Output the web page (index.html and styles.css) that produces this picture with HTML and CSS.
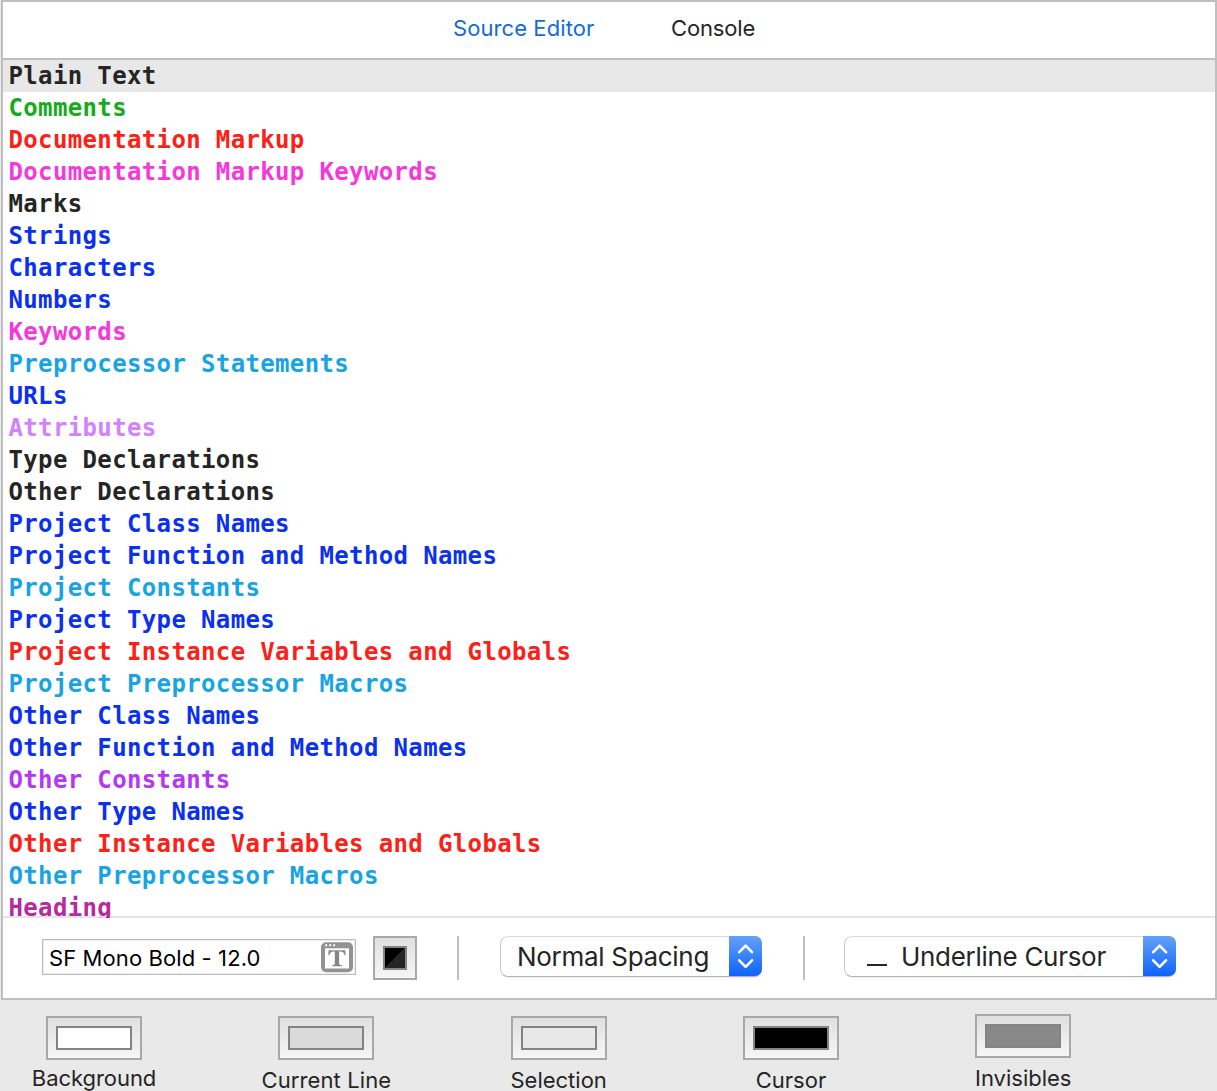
FILE: index.html
```html
<!DOCTYPE html>
<html lang="en">
<head>
<meta charset="utf-8">
<title>Fonts &amp; Colors</title>
<link rel="stylesheet" href="styles.css">
</head>
<body>
<main class="panel">
  <nav class="tabs">
    <span class="tab tab-active">Source Editor</span>
    <span class="tab tab-console">Console</span>
  </nav>
  <ul class="syntax-list">
    <li class="row selected">Plain Text</li>
    <li class="row green">Comments</li>
    <li class="row red">Documentation Markup</li>
    <li class="row pink">Documentation Markup Keywords</li>
    <li class="row">Marks</li>
    <li class="row blue">Strings</li>
    <li class="row blue">Characters</li>
    <li class="row blue">Numbers</li>
    <li class="row pink">Keywords</li>
    <li class="row cyan">Preprocessor Statements</li>
    <li class="row blue">URLs</li>
    <li class="row lilac">Attributes</li>
    <li class="row">Type Declarations</li>
    <li class="row">Other Declarations</li>
    <li class="row blue">Project Class Names</li>
    <li class="row blue">Project Function and Method Names</li>
    <li class="row cyan">Project Constants</li>
    <li class="row blue">Project Type Names</li>
    <li class="row red">Project Instance Variables and Globals</li>
    <li class="row cyan">Project Preprocessor Macros</li>
    <li class="row blue">Other Class Names</li>
    <li class="row blue">Other Function and Method Names</li>
    <li class="row violet">Other Constants</li>
    <li class="row blue">Other Type Names</li>
    <li class="row red">Other Instance Variables and Globals</li>
    <li class="row cyan">Other Preprocessor Macros</li>
    <li class="row plum">Heading</li>
  </ul>
  <div class="toolbar">
    <div class="font-field">
      <span class="font-name">SF Mono Bold - 12.0</span>
      <svg class="font-icon" width="32" height="31" viewBox="0 0 32 31">
        <rect x="0" y="0.3" width="32" height="30" rx="5" fill="#929292"/>
        <rect x="4" y="6.3" width="24" height="20.2" fill="#fff"/>
        <path d="M4.2 2.3h2v2h-2zM8.2 2.3h2v2h-2zM12.2 2.3h2v2h-2z" fill="#fff"/>
        <path d="M7.6 8.3H24.3L24.6 13.3H23.7Q22.8 9.6 19.6 9.5H18.1V21.6Q18.1 23.2 20.8 23.3V24.3H11.2V23.3Q13.8 23.2 13.8 21.6V9.5H12.3Q9.2 9.6 8.2 13.3H7.3Z" fill="#858585"/>
      </svg>
    </div>
    <div class="well well-small"><div class="fill fill-text"></div></div>
    <div class="separator sep-first"></div>
    <div class="popup spacing-popup">
      <span class="popup-label">Normal Spacing</span>
      <span class="stepper"><svg width="33" height="40" viewBox="0 0 33 40"><path d="M10.2 16.2L16.6 9.6L23 16.2M10.2 24.3L16.6 30.9L23 24.3" fill="none" stroke="#fff" stroke-width="2.6" stroke-linecap="round" stroke-linejoin="round"/></svg></span>
    </div>
    <div class="separator sep-second"></div>
    <div class="popup cursor-popup">
      <span class="underline-mark"></span>
      <span class="popup-label">Underline Cursor</span>
      <span class="stepper"><svg width="33" height="40" viewBox="0 0 33 40"><path d="M10.2 16.2L16.6 9.6L23 16.2M10.2 24.3L16.6 30.9L23 24.3" fill="none" stroke="#fff" stroke-width="2.6" stroke-linecap="round" stroke-linejoin="round"/></svg></span>
    </div>
  </div>
</main>
<footer class="swatches">
  <div class="swatch"><div class="well"><div class="fill fill-background"></div></div><span class="caption caption-high">Background</span></div>
  <div class="swatch"><div class="well"><div class="fill fill-line"></div></div><span class="caption line-caption">Current Line</span></div>
  <div class="swatch"><div class="well"><div class="fill fill-selection"></div></div><span class="caption">Selection</span></div>
  <div class="swatch"><div class="well"><div class="fill fill-cursor"></div></div><span class="caption">Cursor</span></div>
  <div class="swatch swatch-raised"><div class="well"><div class="fill fill-invisibles"></div></div><span class="caption">Invisibles</span></div>
</footer>
</body>
</html>
```
FILE: styles.css
```css
* { box-sizing: border-box; }

body {
  margin: 0;
  width: 1217px;
  height: 1091px;
  overflow: hidden;
  background: #e9e9e9;
  color: #252525;
  font-family: Inter, "Liberation Sans", sans-serif;
}

.panel {
  display: flex;
  flex-direction: column;
  height: 1000px;
  margin-left: 1px;
  border: 2px solid #bfbfbf;
  background: #fff;
}

.tabs {
  display: flex;
  height: 58px;
  padding-left: 450px;
  border-bottom: 2px solid #bfbfbf;
  font-size: 22px;
  line-height: 53px;
  white-space: nowrap;
}
.tab { width: 218px; }
.tab-active { color: #126bdb; letter-spacing: 0.08px; }
.tab-console { letter-spacing: -0.15px; }

.syntax-list {
  height: 858px;
  margin: 0;
  padding: 0;
  overflow: hidden;
  list-style: none;
  font: bold 24px/32px "DejaVu Sans Mono", "Liberation Mono", monospace;
  letter-spacing: 0.36px;
  background: linear-gradient(#e4e4e4, #e4e4e4) bottom / 100% 2px no-repeat;
}
.row { height: 32px; padding-left: 5.5px; white-space: pre; }
.selected { background: #e8e8e8; }
.green { color: #16ab1a; }
.red { color: #fc2018; }
.pink { color: #f538da; }
.blue { color: #0b30f0; }
.cyan { color: #18a4e2; }
.lilac { color: #d281ff; }
.violet { color: #b536f4; }
.plum { color: #b52a9c; }

.toolbar {
  display: flex;
  align-items: flex-start;
  flex: 1;
  padding: 18px 0 0 39px;
}
.font-field {
  display: flex;
  width: 314px;
  height: 36px;
  margin-top: 3px;
  padding: 1px 2px 0 6px;
  border: 1px solid #bcbcbc;
  box-shadow: inset 0 0 0 1px #eee;
  justify-content: space-between;
  color: #000;
  font-size: 22px;
  letter-spacing: 0.1px;
  line-height: 34px;
  white-space: nowrap;
}
.font-icon { margin-top: 1px; }

.well {
  width: 96px;
  height: 44px;
  padding: 8px;
  border: 2px solid #a8a8a8;
  background: linear-gradient(#dfdfdf, #f6f6f6);
}
.well-small { width: 44px; margin-left: 17px; }
.fill { height: 24px; border: 2px solid #838383; }
.fill-text { background: linear-gradient(135deg, #000 50%, #252525 50%); }
.fill-background { background: #fff; }
.fill-line { background: #dadada; }
.fill-selection { background: #e8e8e8; }
.fill-cursor { background: #000; }
.fill-invisibles { background: #898989; }

.separator { width: 2px; height: 44px; background: #bfbfbf; }
.sep-first { margin-left: 40px; }
.sep-second { margin-left: 41px; }

.popup {
  display: flex;
  height: 41px;
  border: 1px solid #c9c9c9;
  border-top-color: #d8d8d8;
  border-bottom-color: #b2b2b2;
  border-radius: 8px;
  font-size: 26px;
  letter-spacing: -0.3px;
  line-height: 40px;
  white-space: nowrap;
  box-shadow: 0 1px 1px rgba(0, 0, 0, 0.06);
}
.spacing-popup { width: 262px; margin-left: 41px; padding-left: 16px; }
.cursor-popup { width: 332px; margin-left: 39px; padding-left: 22px; }
.stepper {
  width: 33px;
  height: 40px;
  margin: -1px -1px 0 auto;
  border-radius: 0 7px 7px 0;
  background: linear-gradient(#65a1f7, #0d63fc);
}
.stepper svg { display: block; }
.underline-mark { width: 20px; height: 2px; margin: 27px 14px 0 0; background: #252525; }

.swatches {
  display: grid;
  grid-template-columns: repeat(5, 232.3px);
  padding: 16px 0 0;
  margin-left: -22.1px;
}
.swatch { display: flex; flex-direction: column; align-items: center; }
.swatch-raised { margin-top: -2px; }
.caption { height: 31px; margin-top: 5px; font-size: 22px; line-height: 31px; white-space: nowrap; }
.caption-high { margin-top: 3px; letter-spacing: -0.05px; }
.line-caption { letter-spacing: 0.1px; }
```
